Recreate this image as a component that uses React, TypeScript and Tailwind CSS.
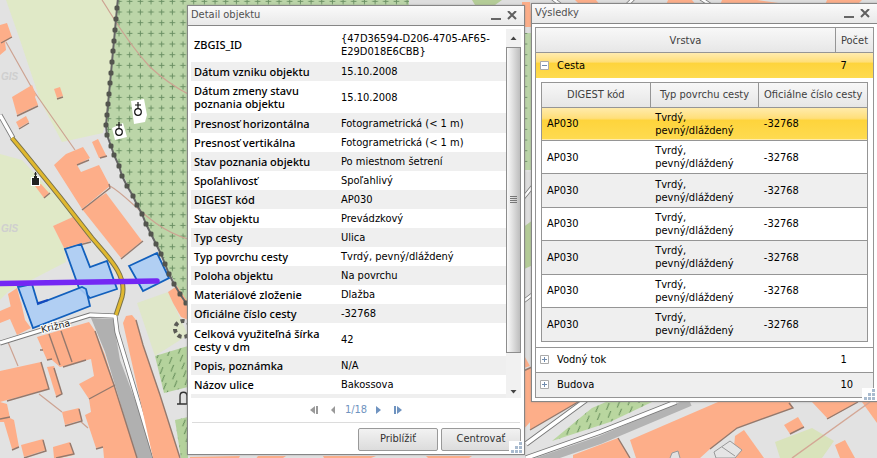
import type { ReactNode } from "react";

const details: [string, string][] = [
  ["ZBGIS_ID", "{47D36594-D206-4705-AF65-E29D018E6CBB}"],
  ["Dátum vzniku objektu", "15.10.2008"],
  ["Dátum zmeny stavu poznania objektu", "15.10.2008"],
  ["Presnosť horizontálna", "Fotogrametrická (< 1 m)"],
  ["Presnosť vertikálna", "Fotogrametrická (< 1 m)"],
  ["Stav poznania objektu", "Po miestnom šetrení"],
  ["Spoľahlivosť", "Spoľahlivý"],
  ["DIGEST kód", "AP030"],
  ["Stav objektu", "Prevádzkový"],
  ["Typ cesty", "Ulica"],
  ["Typ povrchu cesty", "Tvrdý, pevný/dláždený"],
  ["Poloha objektu", "Na povrchu"],
  ["Materiálové zloženie", "Dlažba"],
  ["Oficiálne číslo cesty", "-32768"],
  ["Celková využiteľná šírka cesty v dm", "42"],
  ["Popis, poznámka", "N/A"],
  ["Názov ulice", "Bakossova"],
];

const buildings = [
  "0,25 7,23 12,37 5,42 6,50 0,55",
  "12,97 32,85 36,95 35,97 38,105 17,115",
  "54,89 60,87 63,96 57,98",
  "16,122 26,116 29,122 19,128",
  "92,142 98,139 106,155 107,157 99,158",
  "54,165 66,154 83,147 90,158 77,165 81,172 99,165 110,186 82,209",
  "82,209 106,193 142,241 121,258",
  "53,226 75,216 91,241 64,248",
  "35,186 41,184 49,193 44,198",
  "8,294 17,288 21,303 11,308",
  "0,311 21,302 25,320 31,328 17,335 10,319 0,323",
  "37,337 89,322 95,331 105,355 114,385 125,420 137,458 104,458 103,447 96,448 85,415 91,412 89,399 79,384 94,376 91,359 60,367 52,360 47,360",
  "47,367 54,366 62,394 56,396",
  "0,371 41,362 49,389 7,400 0,402",
  "0,402 7,404 10,418 14,420 19,447 12,449 4,422 0,422",
  "62,412 79,408 82,420 65,425",
  "21,445 43,439 46,450 24,457",
  "53,447 70,442 74,455 60,458 54,458",
  "173,303 168,292 177,286 188,302 188,320 181,317",
  "123,323 126,316 132,315 136,320 143,345 160,395 180,458 153,458",
  "190,457 240,456 238,460 190,460",
  "258,456 286,456 280,460 255,460",
  "323,456 376,456 366,460 325,460",
  "426,456 472,456 466,460 430,460",
  "522,2 530,2 532,27 522,27",
  "521,350 530,366 521,369",
  "521,372 532,367 532,420 521,432",
  "530,402 578,402 530,430",
  "573,455 618,438 630,458 573,458",
  "630,440 718,402 790,402 793,408 737,428 710,449 700,458 636,458",
  "735,436 744,430 764,458 733,458",
  "784,425 798,417 804,427 790,434",
  "812,402 858,402 828,419",
  "862,402 877,402 877,423",
  "835,445 845,440 855,458 840,458",
  "575,0 596,0 600,5 580,5",
  "668,0 692,0 696,5 666,5",
  "722,0 757,0 793,5 720,5",
  "827,0 862,0 857,5 825,5",
];

const wall: [number, number][] = [
  [117, 8], [116, 19], [115, 30], [114, 41], [113, 51], [112, 62], [111, 73], [110, 83], [109, 94], [108, 104],
  [107, 115], [106, 125], [107, 135], [111, 146], [114, 155], [119, 166], [122, 176], [127, 186], [133, 196],
  [137, 205], [142, 214], [146, 224], [151, 234], [156, 244], [161, 254], [165, 264], [169, 274], [174, 284], [180, 294], [186, 303],
];

function Grave({ x, y }: { x: number; y: number }) {
  return (
    <g transform={`translate(${x} ${y})`} fill="none" stroke="#111" strokeWidth="1.2">
      <circle r="3.3" />
      <path d="M0-3.3V-10M-3-7H3" />
    </g>
  );
}

function MapCanvas() {
  return (
    <svg viewBox="0 0 877 458" preserveAspectRatio="xMinYMin slice" className="absolute inset-0 h-full w-full" aria-hidden="true">
      <defs>
        <pattern id="crosses" x="113.7" y="-4" width="10.67" height="10.67" patternUnits="userSpaceOnUse">
          <path d="M5.3 2.6v5.6M2.5 5.4h5.6" stroke="#6a8f63" strokeWidth="1" />
        </pattern>
        <pattern id="hatch" width="11" height="8" patternUnits="userSpaceOnUse" patternTransform="rotate(-12)">
          <path d="M2 7L6 1" stroke="#557f4c" strokeWidth="1" />
        </pattern>
      </defs>
      <rect width="877" height="458" fill="#e2e2e2" />
      <path d="M6 0H118L113 50 107 115 103 133 62 142 40 100 20 40Z" fill="#e0e9c7" />
      <path d="M0 154L22 160 50 190 76 216 53 226 64 248 66 262 8 292 0 300Z" fill="#e0e9c7" />
      <path d="M137 303L168 292 188 335 155 356Z" fill="#dfe7c9" />
      <path d="M118 0H409L420 8H531V170H522V303H186L165 264 137 205 114 155 106 125 113 50Z" fill="#bbd5a8" />
      <path d="M118 0H409L420 8H531V170H522V303H186L165 264 137 205 114 155 106 125 113 50Z" fill="url(#crosses)" />
      <path d="M409 0H877V5H409ZM522 3H533V33H522ZM522 172H533V402H522Z" fill="#dedede" />
      <path d="M472 0H502L495 5H475ZM522 228L533 220V265L522 270Z" fill="#b4cc97" />
      <path d="M155 356L188 346V387L164 393ZM175 420L188 417V458H181Z" fill="#b4d29c" />
      <path d="M155 356L188 346V387L164 393ZM175 420L188 417V458H181Z" fill="url(#hatch)" />

      <g fill="none" stroke="#cda392" strokeWidth="1.2">
        <path d="M102 0C112 15 125 40 150 67C163 79 175 87 188 94" />
        <path d="M6 42L33 90 75 150M110 186C130 197 150 228 188 239M8 342L18 366M39 394L62 412M80 421L88 428" />
      </g>

      <path d="M91 318L113 319 120 360 137 405 153 458H136L118 395 105 352Z" fill="#b0b0b0" />
      <g fill="none" strokeLinejoin="round">
        <path d="M0 343L90 315 115 316 117 332 155 458" stroke="#777" strokeWidth="5" />
        <path d="M0 343L90 315 115 316 117 332 155 458" stroke="#fff" strokeWidth="3.4" />
        <path d="M0 115L13 138" stroke="#777" strokeWidth="5" />
        <path d="M0 115L13 138" stroke="#fff" strokeWidth="3.4" />
      </g>

      <g fill="#fdae89">
        {buildings.map((points) => (
          <polygon key={points} points={points} />
        ))}
      </g>
      <g fill="none" stroke="#94796d" strokeWidth="1.4">
        <path d="M1 43L12 37M17 116L38 106M57 99L63 97M19 129L29 123M100 158L107 156M77 165L89 160M82 210L110 188 109 184M121 259L143 241M64 249L91 242M44 198L50 193M7 401L49 389 41 362M56 397L62 394 54 368M65 426L82 421 79 409M12 450L19 447M24 458L46 451 43 440M56 458L74 454 70 443M0 419L10 417M63 367L86 360M49 334L60 365M61 331L72 362M89 399L115 385M95 331L114 385 137 458M136 320L143 345 160 395 180 458M40 350H43M47 360L52 359M96 449L103 447M790 434L804 427M789 403L793 408 737 428 710 449M827 419L858 402M618 438L630 458M521 372L532 367M530 430L578 402" />
      </g>

      <g stroke="#1260bd" strokeWidth="1.8" fill="#accdf5" fillOpacity="0.9">
        <polygon points="65,249 81,244 90,267 107,261 117,289 90,298 79,288" />
        <polygon points="129,266 157,253 169,278 143,291" />
        <polygon points="18,287 32,284 38,304 82,287 86,289 90,306 33,328" />
      </g>
      <path d="M37 303.500L48 300" stroke="#1447bd" strokeWidth="2" />

      <g fill="none" strokeLinejoin="round">
        <path d="M12 138L22 150 60 197 92 238C107 256 128 275 122 297L116 315" stroke="#77714b" strokeWidth="5" />
        <path d="M12 138L22 150 60 197 92 238C107 256 128 275 122 297L116 315" stroke="#e0b82f" strokeWidth="3" />
      </g>
      <path d="M0 283.500L157 281" stroke="#7427f4" strokeWidth="5.500" strokeLinecap="round" />

      <polyline points={`118,-2 ${wall.map((p) => p.join(",")).join(" ")}`} fill="none" stroke="#666" strokeWidth="2" />
      <g fill="#53554e">
        {wall.map(([x, y]) => (
          <rect key={y} x={x - 2.5} y={y - 2.5} width="5" height="5" rx="1.5" />
        ))}
      </g>
      <circle cx="183" cy="329" r="8" fill="none" stroke="#5b5b56" strokeWidth="4" strokeDasharray="4 3" />
      <path d="M131 101L144 99 147 115 145 122 134 124ZM112 128L123 123 127 137 115 140Z" fill="#fff" />
      <Grave x={138} y={112} />
      <Grave x={119} y={132} />
      <path d="M31 177H40V186H31Z" fill="#fff" />
      <path d="M32 178H39V185H32ZM34 176H37V178H34Z" fill="#222" />
      <path d="M35.500 172V177M34 174H37" stroke="#222" />
      <path d="M180 404V396C180 391 187 391 187 396V404M177 404H188" fill="none" stroke="#333" strokeWidth="1.400" />

      <text x="0" y="0" transform="translate(42 333) rotate(-14)" fontSize="9.500" fill="#222" stroke="#fff" strokeWidth="2" paintOrder="stroke" className="font-['DejaVu_Sans']">
        Križna
      </text>
      <g fontSize="10" fontWeight="bold" fontStyle="italic" fill="#cfcfcf" className="font-['Liberation_Sans']">
        <text x="1" y="80">GIS</text>
        <text x="1" y="232">GIS</text>
      </g>

      <g fill="none">
        <path d="M552 441L592 408 606 402H652L610 422Z" fill="#b9d69f" />
        <path d="M552 441L592 408 606 402H652L610 422Z" fill="url(#hatch)" />
        <path d="M530 464L600 440 690 402" stroke="#b3b3b3" strokeWidth="8" />
        <path d="M526 444L586 400M526 458L600 432 676 402" stroke="#777" strokeWidth="5.500" />
        <path d="M526 444L586 400M526 458L600 432 676 402" stroke="#fff" strokeWidth="3.800" />
        <path d="M520 202L533 186M520 304L533 294M552 -2L562 6M626 6L634 -2M700 -2L712 6" stroke="#777" strokeWidth="4" />
        <path d="M520 202L533 186M520 304L533 294M552 -2L562 6M626 6L634 -2M700 -2L712 6" stroke="#fff" strokeWidth="2.500" />
        <path d="M775 442L812 428 834 441 822 458H780Z" fill="#d9e3bb" />
        <path d="M792 458L870 402" stroke="#d4a795" strokeWidth="1.500" />
        <path d="M714 452L730 441 742 450 735 458H716Z" fill="#e5e5e5" stroke="#999" />
        <path d="M722 447L735 456M670 458L672 453 678 451 680 458" stroke="#999" fill="#e2e2e2" />
      </g>
    </svg>
  );
}

function Grip() {
  return (
    <svg width="15" height="13" viewBox="0 0 15 13" className="absolute right-0 bottom-0" aria-hidden="true">
      <path d="M0 0H15V13H0Z" fill="#fff" />
      <path d="M10 1h3v3h-3zM6 5h3v3H6zM10 5h3v3h-3zM2 9h3v3H2zM6 9h3v3H6zM10 9h3v3h-3z" fill="#a9bbcf" />
    </svg>
  );
}

function Window({ title, className, children }: { title: string; className: string; children: ReactNode }) {
  return (
    <section className={`absolute border border-[#868686] bg-white shadow-[0_0_2px_#8889] ${className}`}>
      <header className="flex h-5 items-center border-b border-[#868686] bg-linear-to-b from-[#fafafa] to-[#e9e9e9] pr-1.5 pl-[3px]">
        <h2 className="flex-1 text-[#505050]">{title}</h2>
        <button aria-label="Minimalizovať" className="flex h-4 w-5 items-center justify-center">
          <svg width="10" height="10" viewBox="0 0 10 10">
            <path d="M0 8H10" stroke="#666" strokeWidth="2" />
          </svg>
        </button>
        <button aria-label="Zavrieť" className="flex h-4 w-3 items-center justify-center">
          <svg width="10" height="10" viewBox="0 0 10 10">
            <path d="M1 0L9 8M9 0L1 8" stroke="#606060" strokeWidth="2" />
          </svg>
        </button>
      </header>
      {children}
      <Grip />
    </section>
  );
}

function PagerButton({ label, path, color }: { label: string; path: string; color: string }) {
  return (
    <button aria-label={label}>
      <svg width="9" height="8" viewBox="0 0 9 8" className={color} fill="currentColor">
        <path d={path} />
      </svg>
    </button>
  );
}

function DetailWindow() {
  return (
    <Window title="Detail objektu" className="top-[5px] left-[187px] w-[338px]">
      <div className="flex h-[372px] pr-[3px] pl-[3px]">
        <div className="flex-1 overflow-hidden pt-px">
          <table className="h-[386px] w-full border-collapse text-left leading-[13px]">
            <tbody>
              {details.map(([label, value], i) => (
                <tr key={label} className="odd:bg-white even:bg-[#efefef]">
                  <th scope="row" className={`w-[146px] px-[3px] font-['Noto_Sans'] font-medium ${i === 0 ? "py-[11px]" : "py-[3px]"}`}>
                    {label}
                  </th>
                  <td className="px-1 py-[3px]">{value}</td>
                </tr>
              ))}
              <tr className="bg-[#efefef]">
                <td colSpan={2} className="h-[19px]" />
              </tr>
            </tbody>
          </table>
        </div>
        <div className="mt-[3px] flex w-[15px] flex-col items-center bg-[#f1f1f1]">
          <svg width="15" height="18" viewBox="0 0 15 18" aria-hidden="true">
            <path d="M4.500 11L7.500 7.500 10.500 11Z" fill="#444" />
          </svg>
          <div className="flex h-[306px] w-full items-center justify-center border border-[#8d8d8d] bg-linear-to-r from-[#fafafa] via-[#dcdcdc] to-[#bdbdbd]">
            <svg width="7" height="8" viewBox="0 0 7 8" aria-hidden="true">
              <path d="M0 .5H7M0 2.500H7M0 4.500H7M0 6.500H7" stroke="#777" />
            </svg>
          </div>
          <svg width="15" height="45" viewBox="0 0 15 45" aria-hidden="true">
            <path d="M4.500 37L7.500 40.500 10.500 37Z" fill="#444" />
          </svg>
        </div>
      </div>
      <nav aria-label="Stránkovanie" className="mx-1 flex h-[25px] items-center justify-center gap-2.5 border-b border-[#dcdcdc] text-[#6f93c0]">
        <PagerButton label="Prvý" color="text-[#999]" path="M5 0V8L0 4ZM6 0h2v8H6z" />
        <PagerButton label="Predchádzajúci" color="text-[#999]" path="M6 0V8L2 4Z" />
        <span className="-mx-[3px]">1/18</span>
        <PagerButton label="Ďalší" color="text-[#6f93c0]" path="M2 0V8L7 4Z" />
        <PagerButton label="Posledný" color="text-[#6f93c0]" path="M1 0h2v8H1zM4 0V8L9 4Z" />
      </nav>
      <footer className="flex justify-end gap-[3px] px-[3px] pt-[5px] pb-[3px] text-[#333]">
        <button className="h-[23px] w-20 rounded-xs border border-[#999] bg-linear-to-b from-[#f2f2f2] to-[#dcdcdc]">Priblížiť</button>
        <button className="h-[23px] w-20 rounded-xs border border-[#999] bg-linear-to-b from-[#f2f2f2] to-[#dcdcdc]">Centrovať</button>
      </footer>
    </Window>
  );
}

const gold = "bg-[linear-gradient(#ffecb0,#ffdf7a_35%,#fed43c_42%,#fedb50)]";

function Toggle({ open, name }: { open?: boolean; name: string }) {
  return (
    <button aria-expanded={!!open} aria-label={name} className="mr-2 flex">
      <svg width="9" height="9" viewBox="0 0 9 9">
        <path d="M.5.500H8.500V8.500H.5Z" fill="#fff" stroke="#aaa" />
        <path d={open ? "M2 4.500H7" : "M2 4.500H7M4.500 2V7"} stroke="#718cae" />
      </svg>
    </button>
  );
}

function LayerRow({ name, count, open, tone }: { name: string; count: number; open?: boolean; tone: string }) {
  return (
    <tr className={`h-[25px] ${tone}`}>
      <td className="pl-1">
        <span className="flex items-center">
          <Toggle open={open} name={name} />
          {name}
        </span>
      </td>
      <td className="pl-[5px]">{count}</td>
    </tr>
  );
}

function ResultsWindow() {
  const header = "border border-[#959595] font-normal text-[#404040]";
  return (
    <Window title="Výsledky" className="top-[3px] left-[531px] w-[347px]">
      <div className="p-[3px]">
        <table className="w-full table-fixed border-collapse border border-[#959595] text-left leading-[13px]">
          <colgroup>
            <col />
            <col className="w-[38px]" />
          </colgroup>
          <thead>
            <tr className="h-[25px] bg-linear-to-b from-[#f8f8f8] to-[#e6e6e6] text-center">
              <th scope="col" className={header}>Vrstva</th>
              <th scope="col" className={header}>Počet</th>
            </tr>
          </thead>
          <tbody>
            <LayerRow name="Cesta" count={7} open tone={gold} />
            <tr>
              <td colSpan={2} className="px-[5px] pt-1 pb-[5px]">
                <table className="h-[260px] w-full table-fixed border-collapse border border-[#959595]">
                  <thead>
                    <tr className="h-[25px] bg-linear-to-b from-[#f8f8f8] to-[#e6e6e6] text-center">
                      <th scope="col" className={header}>DIGEST kód</th>
                      <th scope="col" className={header}>Typ povrchu cesty</th>
                      <th scope="col" className={header}>Oficiálne číslo cesty</th>
                    </tr>
                  </thead>
                  <tbody>
                    {Array.from({ length: 7 }, (_, i) => (
                      <tr key={i} className={`border-b border-[#959595] ${i === 0 ? gold : i % 2 ? "bg-white" : "bg-[#efefef]"}`}>
                        <td className="px-[5px]">AP030</td>
                        <td className="px-[5px] py-[3px]">Tvrdý, pevný/dláždený</td>
                        <td className="px-[5px]">-32768</td>
                      </tr>
                    ))}
                  </tbody>
                </table>
              </td>
            </tr>
            <LayerRow name="Vodný tok" count={1} tone="border-y border-[#959595]" />
            <LayerRow name="Budova" count={10} tone="bg-[#efefef]" />
          </tbody>
        </table>
      </div>
    </Window>
  );
}

export default function App() {
  return (
    <main className="relative h-screen overflow-hidden bg-[#e2e2e2] font-['DejaVu_Sans_Condensed','Noto_Sans',sans-serif] text-[11px] text-black">
      <MapCanvas />
      <DetailWindow />
      <ResultsWindow />
    </main>
  );
}
